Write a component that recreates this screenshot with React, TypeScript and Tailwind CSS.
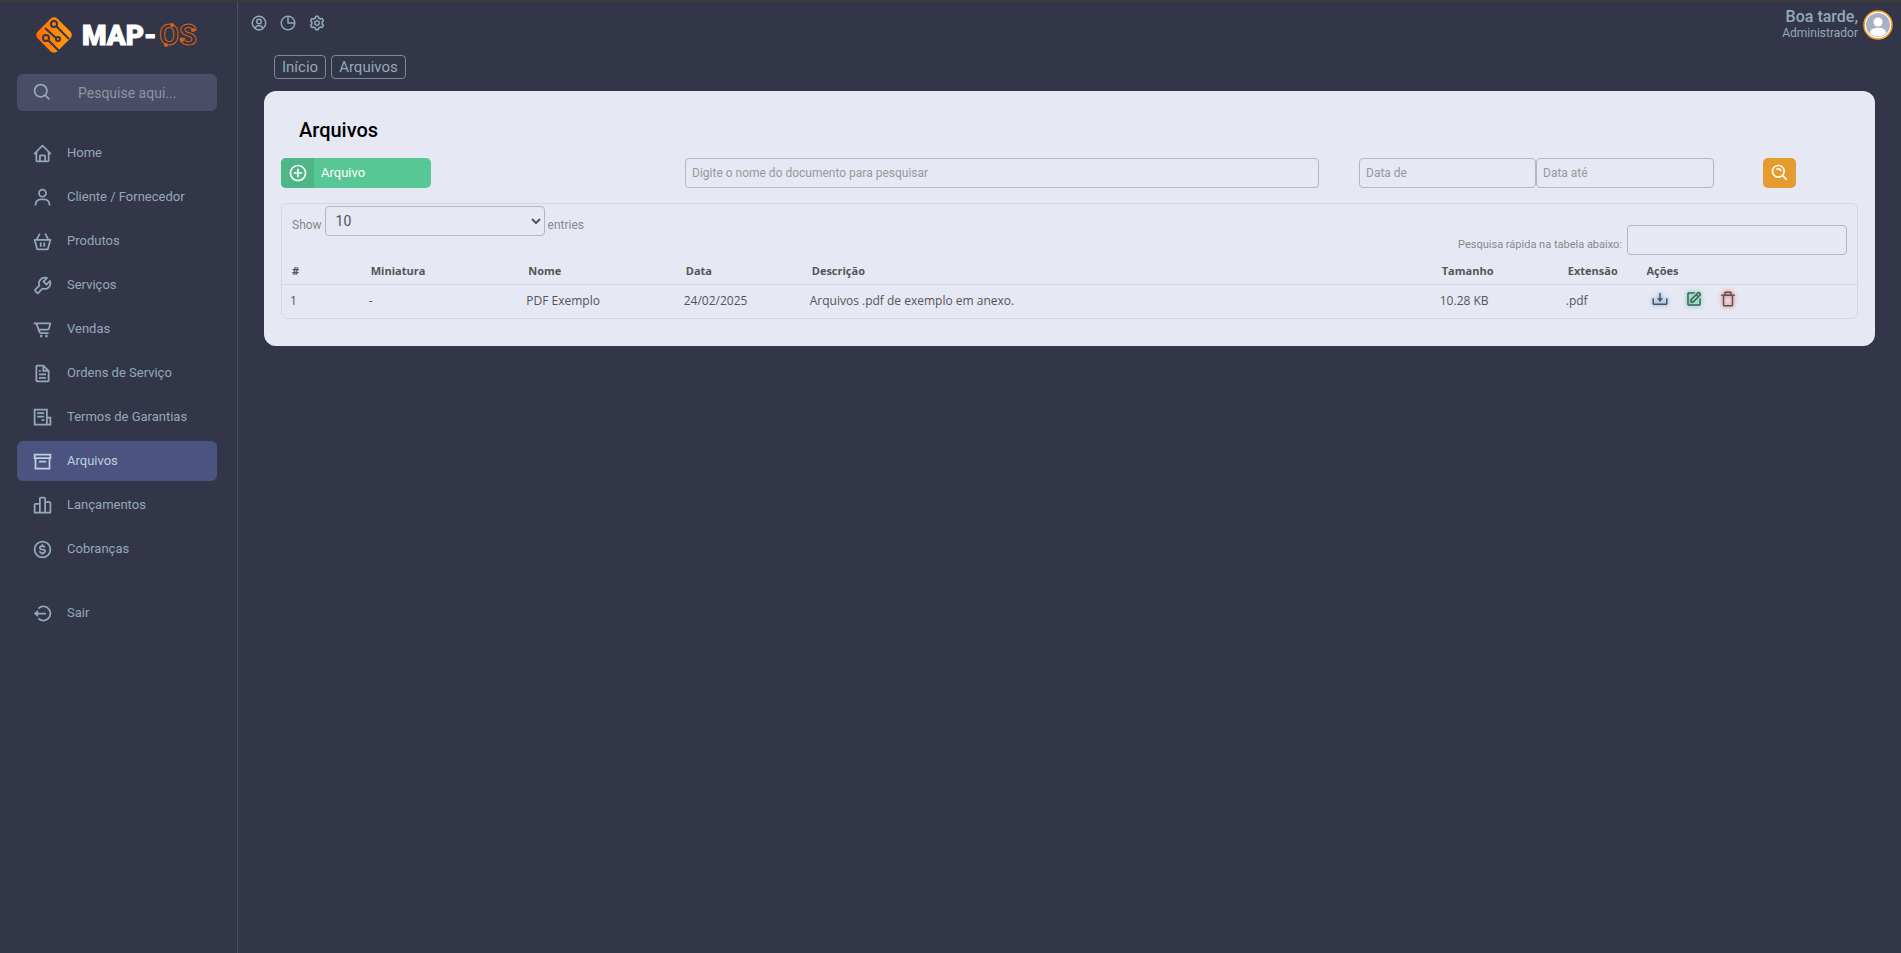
import {
  BiBarChartAlt2,
  BiBasket,
  BiCartAlt,
  BiCog,
  BiDollarCircle,
  BiDownload,
  BiEdit,
  BiFile,
  BiHome,
  BiLogOutCircle,
  BiPieChartAlt,
  BiPlusCircle,
  BiSearch,
  BiSearchAlt,
  BiTrashAlt,
  BiUser,
  BiUserCircle,
  BiWrench,
} from "react-icons/bi";

function NewsIcon({ className }: { className?: string }) {
  return (
    <svg viewBox="0 0 24 24" className={className} fill="none" stroke="currentColor" strokeWidth="2" aria-hidden>
      <path d="M17 20H3V3h14v17h4v-8h-4M6 7h8M6 11h8M11 15h3" />
    </svg>
  );
}

function ArchiveIcon({ className }: { className?: string }) {
  return (
    <svg viewBox="0 0 24 24" className={className} fill="none" stroke="currentColor" strokeWidth="2" aria-hidden>
      <path d="M3 4h18v4H3zM4 8v12h16V8M8 12h8" />
    </svg>
  );
}

const menu = [
  { label: "Home", icon: BiHome },
  { label: "Cliente / Fornecedor", icon: BiUser },
  { label: "Produtos", icon: BiBasket },
  { label: "Serviços", icon: BiWrench },
  { label: "Vendas", icon: BiCartAlt },
  { label: "Ordens de Serviço", icon: BiFile },
  { label: "Termos de Garantias", icon: NewsIcon },
  { label: "Arquivos", icon: ArchiveIcon, active: true },
  { label: "Lançamentos", icon: BiBarChartAlt2 },
  { label: "Cobranças", icon: BiDollarCircle },
];

const files = [
  {
    id: 1,
    thumb: "-",
    name: "PDF Exemplo",
    date: "24/02/2025",
    description: "Arquivos .pdf de exemplo em anexo.",
    size: "10.28 KB",
    extension: ".pdf",
  },
];

function Logo() {
  return (
    <a href="#" aria-label="MAP-OS" className="flex h-[38px] items-center pl-[18px]">
      <svg viewBox="0 0 38 38" className="h-[38px] w-[38px] shrink-0">
        <defs>
          <linearGradient id="mark" x1="0" x2="1" y1="1" y2="0">
            <stop offset="0" stopColor="#ff6a00" />
            <stop offset="1" stopColor="#ffa010" />
          </linearGradient>
        </defs>
        <rect x="5" y="5" width="28" height="28" rx="5" fill="url(#mark)" transform="rotate(45 19 19)" />
        <g fill="none" stroke="#333649" strokeWidth="2">
          <circle cx="19" cy="8" r="3" />
          <path d="M21 10l13 13M10 12l11 10" />
          <circle cx="11" cy="22" r="3" />
          <path d="M13 24l11 11" />
          <circle cx="23" cy="23" r="2" />
        </g>
      </svg>
      <svg viewBox="0 0 130 38" className="h-[38px] w-[130px] shrink-0">
        <text x="9" y="29" fill="#fff" stroke="#fff" strokeWidth="1" fontFamily="Roboto" fontWeight="900" fontSize="28">MAP-</text>
        <text x="86" y="29" fill="none" stroke="#d9630f" fontFamily="Roboto" fontWeight="700" fontSize="29">OS</text>
        <g fill="#d9630f">
          <circle cx="99" cy="9" r="2" />
          <circle cx="93" cy="29" r="2" />
          <circle cx="120" cy="14" r="2" />
          <circle cx="109" cy="24" r="2" />
        </g>
      </svg>
    </a>
  );
}

function Sidebar() {
  return (
    <aside className="flex w-[238px] shrink-0 flex-col border-r border-[#4b4e62] pt-[14px] pr-5 pl-[17px]">
      <Logo />
      <label className="mt-5 flex h-[37px] items-center rounded-md bg-[#4a4d65] pl-[15px]">
        <BiSearch className="h-[21px] w-[21px] shrink-0 text-[#94a8bb]" aria-hidden />
        <input
          type="text"
          aria-label="Pesquisar"
          placeholder="Pesquise aqui..."
          className="ml-[25px] w-full min-w-0 bg-transparent text-sm outline-none placeholder:text-[#8c95a3]"
        />
      </label>
      <nav className="mt-[22px] flex flex-col gap-1">
        {menu.map(({ label, icon: Icon, active }) => (
          <a
            key={label}
            href="#"
            className={`flex h-10 items-center rounded-md pl-[15px] text-[13px] ${
              active ? "bg-[#4b5480] text-[#bccfdc]" : "text-[#94a8bb]"
            }`}
          >
            <Icon className="mr-[14px] h-[21px] w-[21px]" />
            {label}
          </a>
        ))}
      </nav>
      <a href="#" className="mt-6 flex h-10 items-center rounded-md pl-[15px] text-[13px] text-[#94a8bb]">
        <BiLogOutCircle className="mr-[14px] h-[21px] w-[21px]" />
        Sair
      </a>
    </aside>
  );
}

function TopBar() {
  return (
    <header className="flex h-[46px] items-start justify-between pr-2 pl-3">
      <div className="flex gap-[11px] pt-3">
        <button aria-label="Perfil"><BiUserCircle className="h-[18px] w-[18px]" /></button>
        <button aria-label="Relatórios"><BiPieChartAlt className="h-[18px] w-[18px]" /></button>
        <button aria-label="Configurações"><BiCog className="h-[18px] w-[18px]" /></button>
      </div>
      <div className="flex items-center gap-[5px] pt-[7px]">
        <div className="text-right">
          <div className="text-base leading-4 font-medium">Boa tarde,</div>
          <div className="text-xs leading-4">Administrador</div>
        </div>
        <svg viewBox="0 0 30 30" className="h-[30px] w-[30px]">
          <circle cx="15" cy="15" r="14" fill="#fff" stroke="#f59a1c" strokeWidth="1.5" />
          <circle cx="15" cy="15" r="12" fill="#a5b2c6" />
          <circle cx="15" cy="12" r="4.5" fill="#fff" />
          <path d="M7 23c0-7 16-7 16 0a11 11 0 0 1-16 0z" fill="#fff" />
        </svg>
      </div>
    </header>
  );
}

const field = "h-[30px] rounded border border-[#b3b7c4] bg-transparent px-[6px] text-xs outline-none placeholder:text-[#999]";

function Filters() {
  return (
    <form className="flex items-start" onSubmit={(e) => e.preventDefault()}>
      <div className="w-[404px] shrink-0">
        <button type="button" className="flex h-[30px] w-[150px] items-center overflow-hidden rounded-[5px] bg-[#57c795] text-[13px] text-white">
          <span className="flex h-full w-[33px] items-center justify-center bg-[#4fb688]">
            <BiPlusCircle className="h-5 w-5" />
          </span>
          <span className="pl-[7px]">Arquivo</span>
        </button>
      </div>
      <input type="text" aria-label="Documento" placeholder="Digite o nome do documento para pesquisar" className={`${field} min-w-0 flex-1`} />
      <input type="text" aria-label="Data de" placeholder="Data de" className={`${field} ml-10 w-[177px]`} />
      <input type="text" aria-label="Data até" placeholder="Data até" className={`${field} w-[178px]`} />
      <button aria-label="Pesquisar" className="mr-[62px] ml-[49px] flex h-[30px] w-[33px] items-center justify-center rounded-[5px] bg-[#e69b2e] text-white">
        <BiSearchAlt className="h-5 w-5" />
      </button>
    </form>
  );
}

function FilesTable() {
  return (
    <div className="mt-[15px] rounded-md border border-[#d5d8e3] text-xs text-[#888]">
      <div className="flex h-[55px] justify-between px-[10px]">
        <label className="flex h-[34px] items-center">
          <span className="pt-2">Show</span>
          <select className="mx-[3px] h-[30px] w-[220px] rounded border border-[#b3b7c4] bg-transparent px-[6px] text-sm text-[#555]">
            <option>10</option>
          </select>
          <span className="pt-2">entries</span>
        </label>
        <label className="flex items-center gap-[5px] pt-[17px] text-[11px]">
          <span className="pt-[10px]">Pesquisa rápida na tabela abaixo:</span>
          <input type="search" className={`${field} w-[220px]`} />
        </label>
      </div>
      <table className="w-full table-fixed text-left font-['Open_Sans',sans-serif] text-[#555]">
        <thead className="text-[11px]">
          <tr className="h-[25px] border-b border-[#d5d8e3]">
            <th className="w-[5%] pl-[10px]">#</th>
            <th className="w-[10%] pl-[10px]">Miniatura</th>
            <th className="w-[10%] pl-[10px]">Nome</th>
            <th className="w-[8%] pl-[10px]">Data</th>
            <th className="w-[40%] pl-[10px]">Descrição</th>
            <th className="w-[8%] pl-[10px]">Tamanho</th>
            <th className="w-[5%] pl-[10px]">Extensão</th>
            <th className="pl-[10px]">Ações</th>
          </tr>
        </thead>
        <tbody>
          {files.map((f) => (
            <tr key={f.id} className="h-[34px]">
              <td className="pl-2">{f.id}</td>
              <td className="pl-2">{f.thumb}</td>
              <td className="pl-2">{f.name}</td>
              <td className="pl-2">{f.date}</td>
              <td className="pl-2">{f.description}</td>
              <td className="pl-2">{f.size}</td>
              <td className="pl-2">{f.extension}</td>
              <td className="pb-[5px] pl-[14px]">
                <div className="flex gap-4">
                  <a href="#" aria-label="Baixar"><BiDownload className="h-[18px] w-[18px] drop-shadow-[0_0_2px_#3b8fe0]" /></a>
                  <a href="#" aria-label="Editar"><BiEdit className="h-[18px] w-[18px] drop-shadow-[0_0_2px_#00d27a]" /></a>
                  <a href="#" aria-label="Excluir"><BiTrashAlt className="h-[18px] w-[18px] drop-shadow-[0_0_2px_#ff4a4a]" /></a>
                </div>
              </td>
            </tr>
          ))}
        </tbody>
      </table>
    </div>
  );
}

export default function App() {
  return (
    <div className="flex min-h-screen border-t-2 border-[#3b3b3b] bg-[#333649] font-[Roboto,sans-serif] text-[#94a8bb]">
      <Sidebar />
      <div className="min-w-0 flex-1">
        <TopBar />
        <nav className="mt-[7px] flex gap-[5px] pl-9 text-[15px]">
          <a href="#" className="flex h-6 items-center rounded border border-[#7c8797] px-[7px]">Início</a>
          <a href="#" className="flex h-6 items-center rounded border border-[#7c8797] px-[7px]">Arquivos</a>
        </nav>
        <main className="mx-[26px] mt-3 rounded-xl bg-[#e6e8f4] px-[17px] pt-6 pb-[27px]">
          <h5 className="mb-[13px] pl-[18px] text-xl leading-[30px] font-medium text-black">Arquivos</h5>
          <Filters />
          <FilesTable />
        </main>
      </div>
    </div>
  );
}
